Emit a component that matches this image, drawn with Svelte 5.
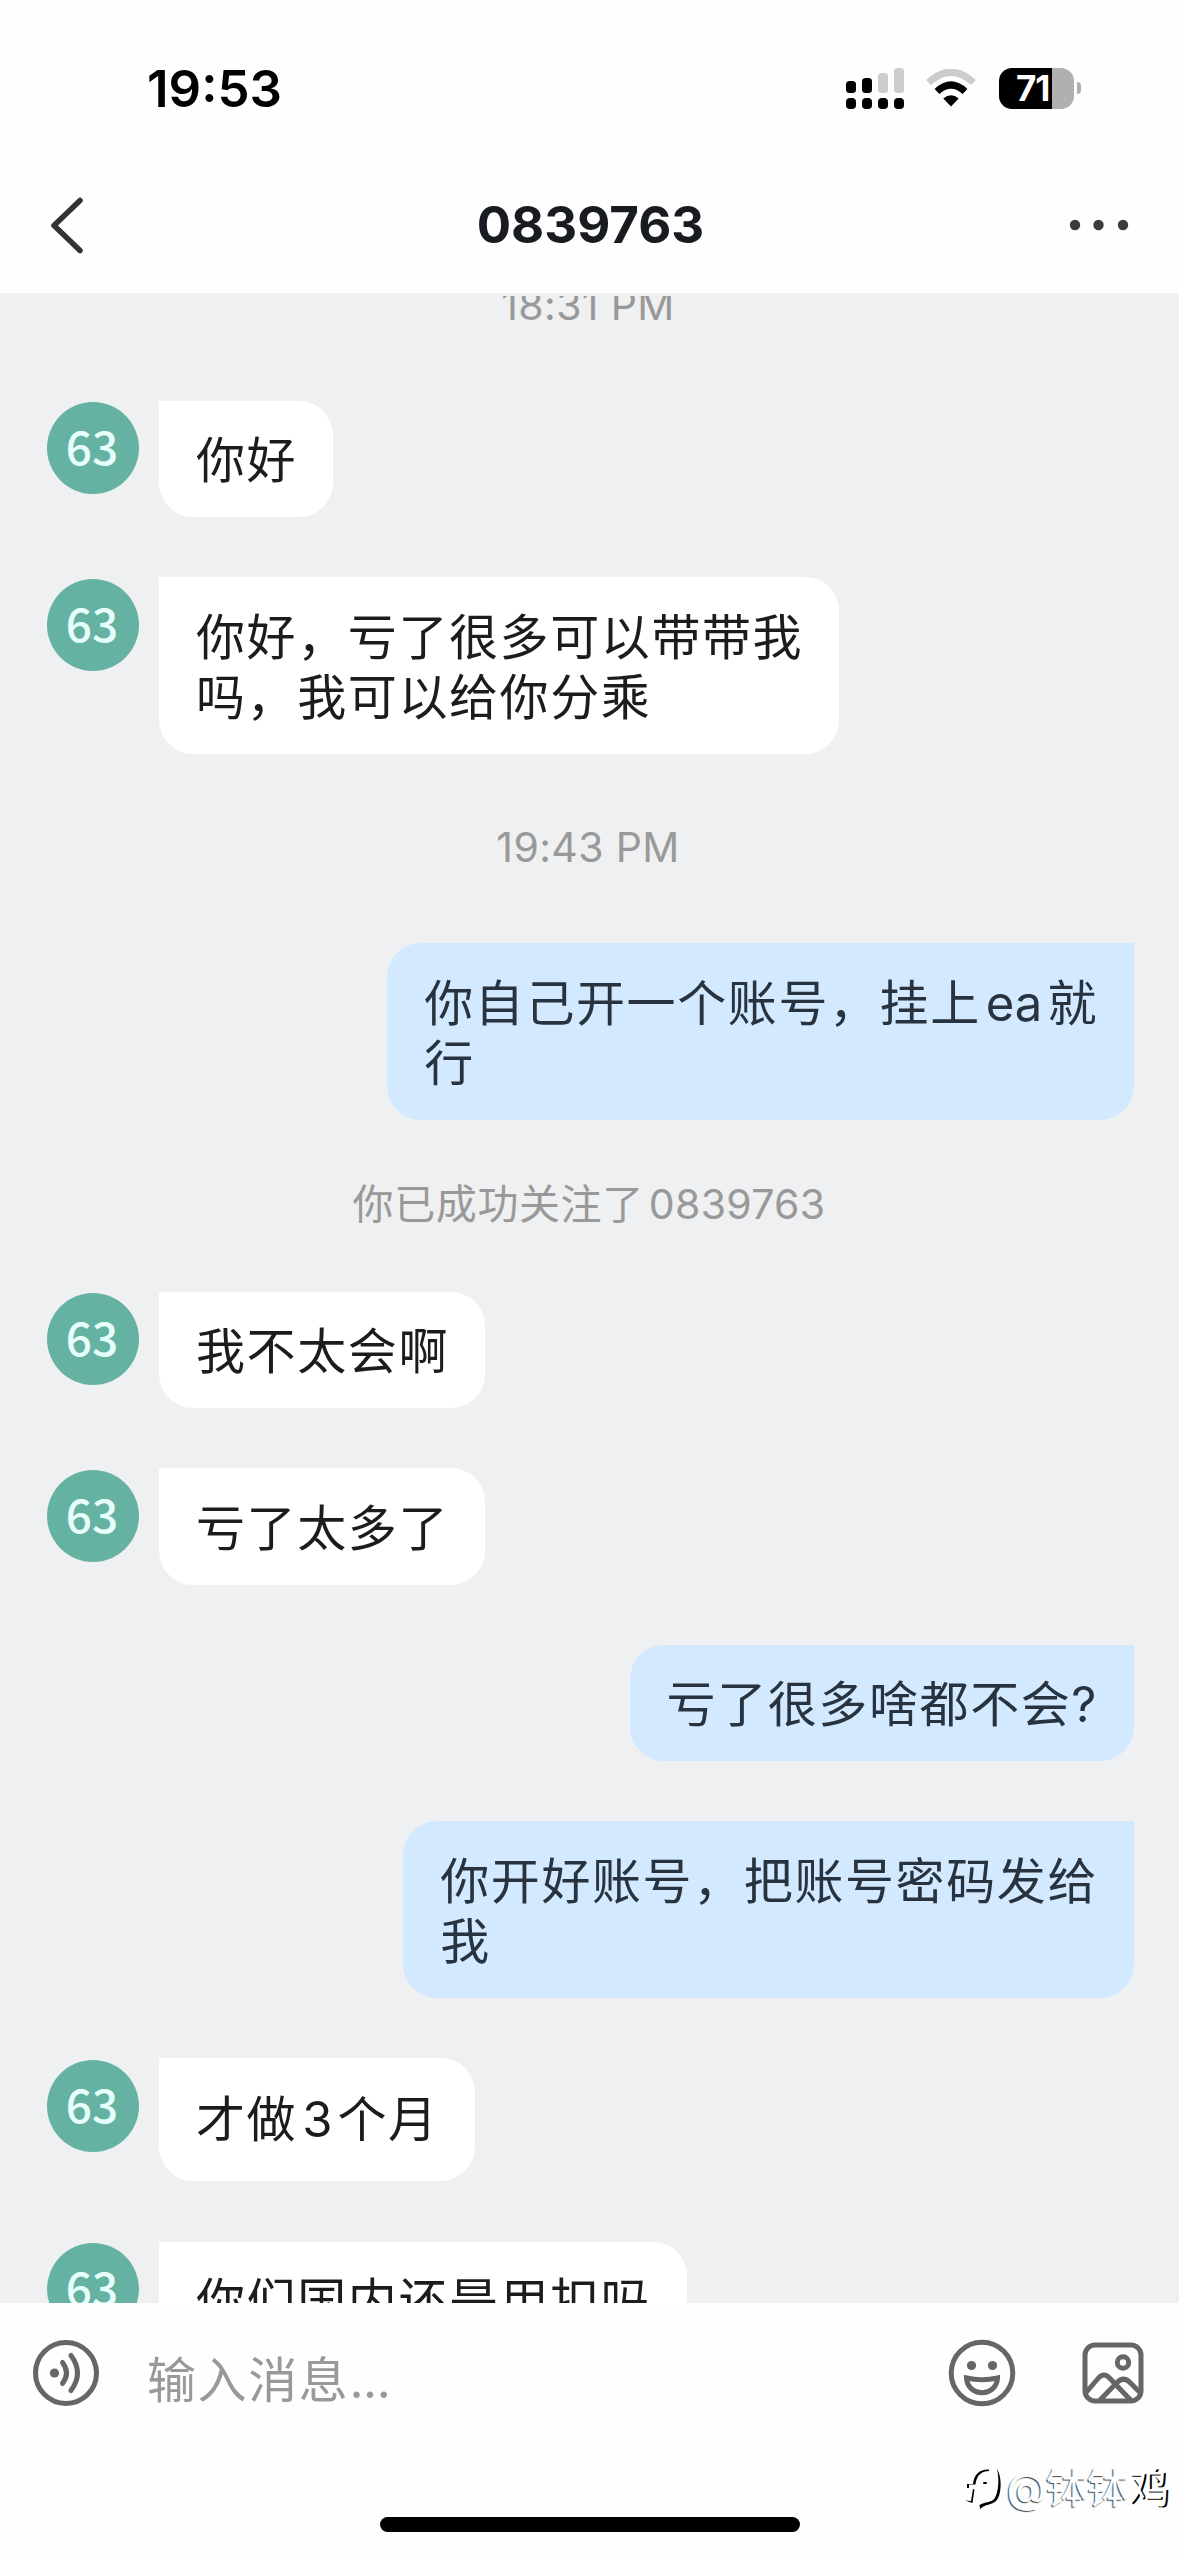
<script>
  const feed = [
    { kind: 'time', text: '18:31 PM' },
    { kind: 'in', lines: ['你好'] },
    { kind: 'in', lines: ['你好，亏了很多可以带带我', '吗，我可以给你分乘'] },
    { kind: 'time', text: '19:43 PM' },
    { kind: 'out', lines: ['你自己开一个账号，挂上ea就', '行'] },
    { kind: 'notice', text: '你已成功关注了0839763' },
    { kind: 'in', lines: ['我不太会啊'] },
    { kind: 'in', lines: ['亏了太多了'] },
    { kind: 'out', lines: ['亏了很多啥都不会?'] },
    { kind: 'out', lines: ['你开好账号，把账号密码发给', '我'] },
    { kind: 'in', tall: true, lines: ['才做3个月'] },
    { kind: 'in', lines: ['你们国内还是用扣吗'] }
  ];

  // Splits a line into Latin and CJK runs, so Latin runs get their own side gaps.
  const runs = (line) =>
    line.split(/([a-z0-9]+)/i).filter(Boolean).map((t) => ({ t, latin: /^[a-z0-9]/i.test(t) }));
</script>

<main class="phone">
  <header>
    <div class="status">
      <span class="clock">19:53</span>
      <div class="indicators">
        <svg class="signal" width="58" height="41" viewBox="0 0 58 41">
          <rect x="0" y="13" width="10" height="12" rx="3.5" />
          <rect x="16" y="10" width="10" height="15" rx="3.5" />
          <rect class="dim" x="32" y="5" width="10" height="20" rx="3.5" />
          <rect class="dim" x="48" y="0" width="10" height="25" rx="3.5" />
          <rect x="0" y="30" width="10" height="11" rx="4" />
          <rect x="16" y="30" width="10" height="11" rx="4" />
          <rect x="32" y="30" width="10" height="11" rx="4" />
          <rect x="48" y="30" width="10" height="11" rx="4" />
        </svg>
        <svg class="wifi" width="50" height="38" viewBox="0 0 50 38">
          <path class="faint" d="M2.5 13.5Q25 -7 47.5 13.5" />
          <path class="arc" d="M11 22.5Q25 9.500 39 22.500" />
          <path d="M17.300 29.500Q25 23 32.700 29.500L25 37.500Z" />
        </svg>
        <div class="battery"><span>71</span></div>
        <i class="nub"></i>
      </div>
    </div>
    <nav>
      <svg width="36" height="58" viewBox="0 0 36 58"><path class="chevron" d="M32 4.500L6 29.500L32 54.500" /></svg>
      <h1>0839763</h1>
      <svg width="60" height="12" viewBox="0 0 60 12" fill="#3b3b3b">
        <circle cx="6" cy="6" r="5.200" /><circle cx="29.500" cy="6" r="5.200" /><circle cx="54" cy="6" r="5.200" />
      </svg>
    </nav>
  </header>

  <div class="chat">
    <div class="feed">
      {#each feed as item}
        {#if item.kind === 'time'}
          <div class="time">{item.text}</div>
        {:else if item.kind === 'notice'}
          <div class="notice">{#each runs(item.text) as r}<span class:num={r.latin}>{r.t}</span>{/each}</div>
        {:else}
          <div class="row {item.kind}">
            {#if item.kind === 'in'}<div class="avatar">63</div>{/if}
            <div class="bubble" class:tall={item.tall}>
              {#each item.lines as line}
                <p>{#each runs(line) as r}<span class:latin={r.latin}>{r.t}</span>{/each}</p>
              {/each}
            </div>
          </div>
        {/if}
      {/each}
    </div>
  </div>

  <footer>
    <div class="composer">
      <svg width="68" height="68" viewBox="0 0 68 68">
        <circle class="line" cx="34" cy="34" r="30.500" />
        <circle class="solid" cx="22.500" cy="34" r="4.600" />
        <path class="line" d="M30.500 23.500Q38.500 34 30.500 44.500M39 16.500Q52 34 39 51.500" />
      </svg>
      <div class="placeholder">输入消息<span>...</span></div>
      <svg class="smile" width="68" height="68" viewBox="0 0 68 68">
        <circle class="line" cx="34" cy="34" r="30.800" />
        <circle class="solid" cx="23.500" cy="26.500" r="4.600" />
        <circle class="solid" cx="44.500" cy="26.500" r="4.600" />
        <path class="line miter" d="M18.500 39Q34 42.500 49.500 39C48.500 58.500 19.500 58.500 18.500 39Z" />
      </svg>
      <svg width="62" height="62" viewBox="0 0 62 62">
        <rect class="line" x="3" y="3" width="56" height="56" rx="10" />
        <circle class="line" cx="41" cy="20.500" r="5.700" />
        <path class="line" d="M4.500 50L16 36.500Q22 29.500 28 36.500L48.500 58M18.500 57.500L35 40.500Q41.500 34 48 40.500L57.500 50" />
      </svg>
    </div>
    <div class="watermark">
      <svg width="38" height="44" viewBox="0 0 38 44">
        <path d="M8 18C9 8 15 3 24 3.500L24 5C17 5 11.500 9 10.500 18.500H4V22H2V18Z" />
        <path d="M32 3C37.500 12 36.500 30 31 35C27 39 20 38 15 43L14.500 39C20 35.500 26 37 29.500 32.500C33.500 27 34.500 13 32 3Z" />
        <path d="M8 23L9.500 23.500L7.500 37L0 34.500L6 35Z" />
        <rect x="18" y="16" width="4" height="2" rx="1" />
      </svg>
      <span class="name">@钵钵<b>鸡</b></span>
    </div>
    <div class="home"></div>
  </footer>
</main>

<style>
  :global(body) { margin: 0; background: #fff; }
  * { box-sizing: border-box; }
  .phone {
    width: 1179px; height: 2556px; overflow: hidden; background: #fefefe;
    display: flex; flex-direction: column;
    font-family: Inter, "Noto Sans CJK SC", sans-serif;
    text-autospace: no-autospace; text-spacing-trim: space-all;
  }
  svg { display: block; flex: none; }
  header { height: 293px; flex: none; }
  .status { height: 176px; padding: 0 98px 0 147px; display: flex; align-items: center; justify-content: space-between; }
  .clock { font-size: 51px; font-weight: 600; color: #000; }
  .indicators { display: flex; align-items: center; }
  .dim { fill: #ccc; }
  .wifi { margin: 0 23px 0 22px; }
  .faint, .arc { fill: none; stroke: #000; stroke-width: 7; }
  .faint { stroke: #ccc; }
  .battery {
    width: 75px; height: 41px; border-radius: 13px; display: flex; align-items: center; padding-left: 17px;
    background: linear-gradient(90deg, #000 53px, #b0b0b0 53px); color: #fff; font-size: 35px; font-weight: 700; letter-spacing: -1px;
  }
  .nub { width: 4px; height: 12px; margin-left: 3px; background: #b0b0b0; border-radius: 0 5px 5px 0; }
  nav { height: 98px; padding: 0 50px 0 48px; display: grid; grid-template-columns: 1fr auto 1fr; align-items: center; }
  nav svg:last-child { justify-self: end; }
  .chevron { fill: none; stroke: #333; stroke-width: 5.500; stroke-linecap: round; stroke-linejoin: round; }
  h1 { margin: 0; padding-left: 4px; font-size: 51px; line-height: 60px; font-weight: 700; color: #181b1f; }

  .chat { height: 2010px; flex: none; background: #eef0f2; padding-top: 3px; }
  .feed { height: 2007px; overflow: hidden; display: flex; flex-direction: column; gap: 60.100px; }
  .time, .notice { flex: none; text-align: center; color: #999; font-size: 41px; }
  .time { height: 69px; line-height: 67px; letter-spacing: .35px; padding-right: 3px; }
  .time:first-child { margin-top: -24.500px; }
  .notice { height: 51px; line-height: 49px; letter-spacing: .6px; padding-right: 1px; }
  .num { margin-left: 5px; letter-spacing: .3px; }
  .row { flex: none; display: flex; align-items: flex-start; padding: 0 45px 0 47px; }
  .out { justify-content: flex-end; }
  .avatar {
    width: 92px; height: 92px; margin: 1.500px 20px 0 0; padding-right: 2px; border-radius: 50%; background: #66b2a2; color: #e6fffa;
    font: 500 46px/87px "Noto Sans CJK SC", sans-serif; text-align: center;
  }
  .bubble {
    padding: 30.500px 36px 25.500px 37px; border-radius: 0 34px 34px 34px; background: #fff; color: #1b1c1e;
    font-size: 49px; letter-spacing: 1.600px; line-height: 60.500px;
  }
  .out .bubble { border-radius: 34px 0 34px 34px; background: #d2e9ff; color: #28333f; }
  .bubble.tall { padding-top: 31.500px; padding-bottom: 31px; }
  p { margin: 0; white-space: nowrap; }
  .latin { margin: 0 5px; letter-spacing: 0; }

  footer { flex: 1; display: flex; flex-direction: column; }
  .composer { height: 140px; padding: 0 35px 0 32px; display: flex; align-items: center; }
  .placeholder { flex: 1; padding: 15px 0 0 47px; font-size: 49px; letter-spacing: 1.600px; line-height: 60px; color: #999; }
  .placeholder span { letter-spacing: -.4px; }
  .smile { margin-right: 66px; }
  .line { fill: none; stroke: #666; stroke-width: 5; stroke-linecap: round; stroke-linejoin: round; }
  .miter { stroke-linejoin: miter; }
  .solid { fill: #666; }
  .watermark { height: 74px; padding: 15px 10px 0 0; display: flex; align-items: center; justify-content: flex-end; gap: 3px; }
  .name { font-size: 41px; line-height: 50px; color: #fff; text-shadow: -1px 1px 1px #444; white-space: nowrap; }
  .name b { font-weight: 400; text-shadow: 2px 1px 0 #000; }
  .home { width: 420px; height: 15px; margin: 0 auto; border-radius: 8px; background: #000; }
</style>
